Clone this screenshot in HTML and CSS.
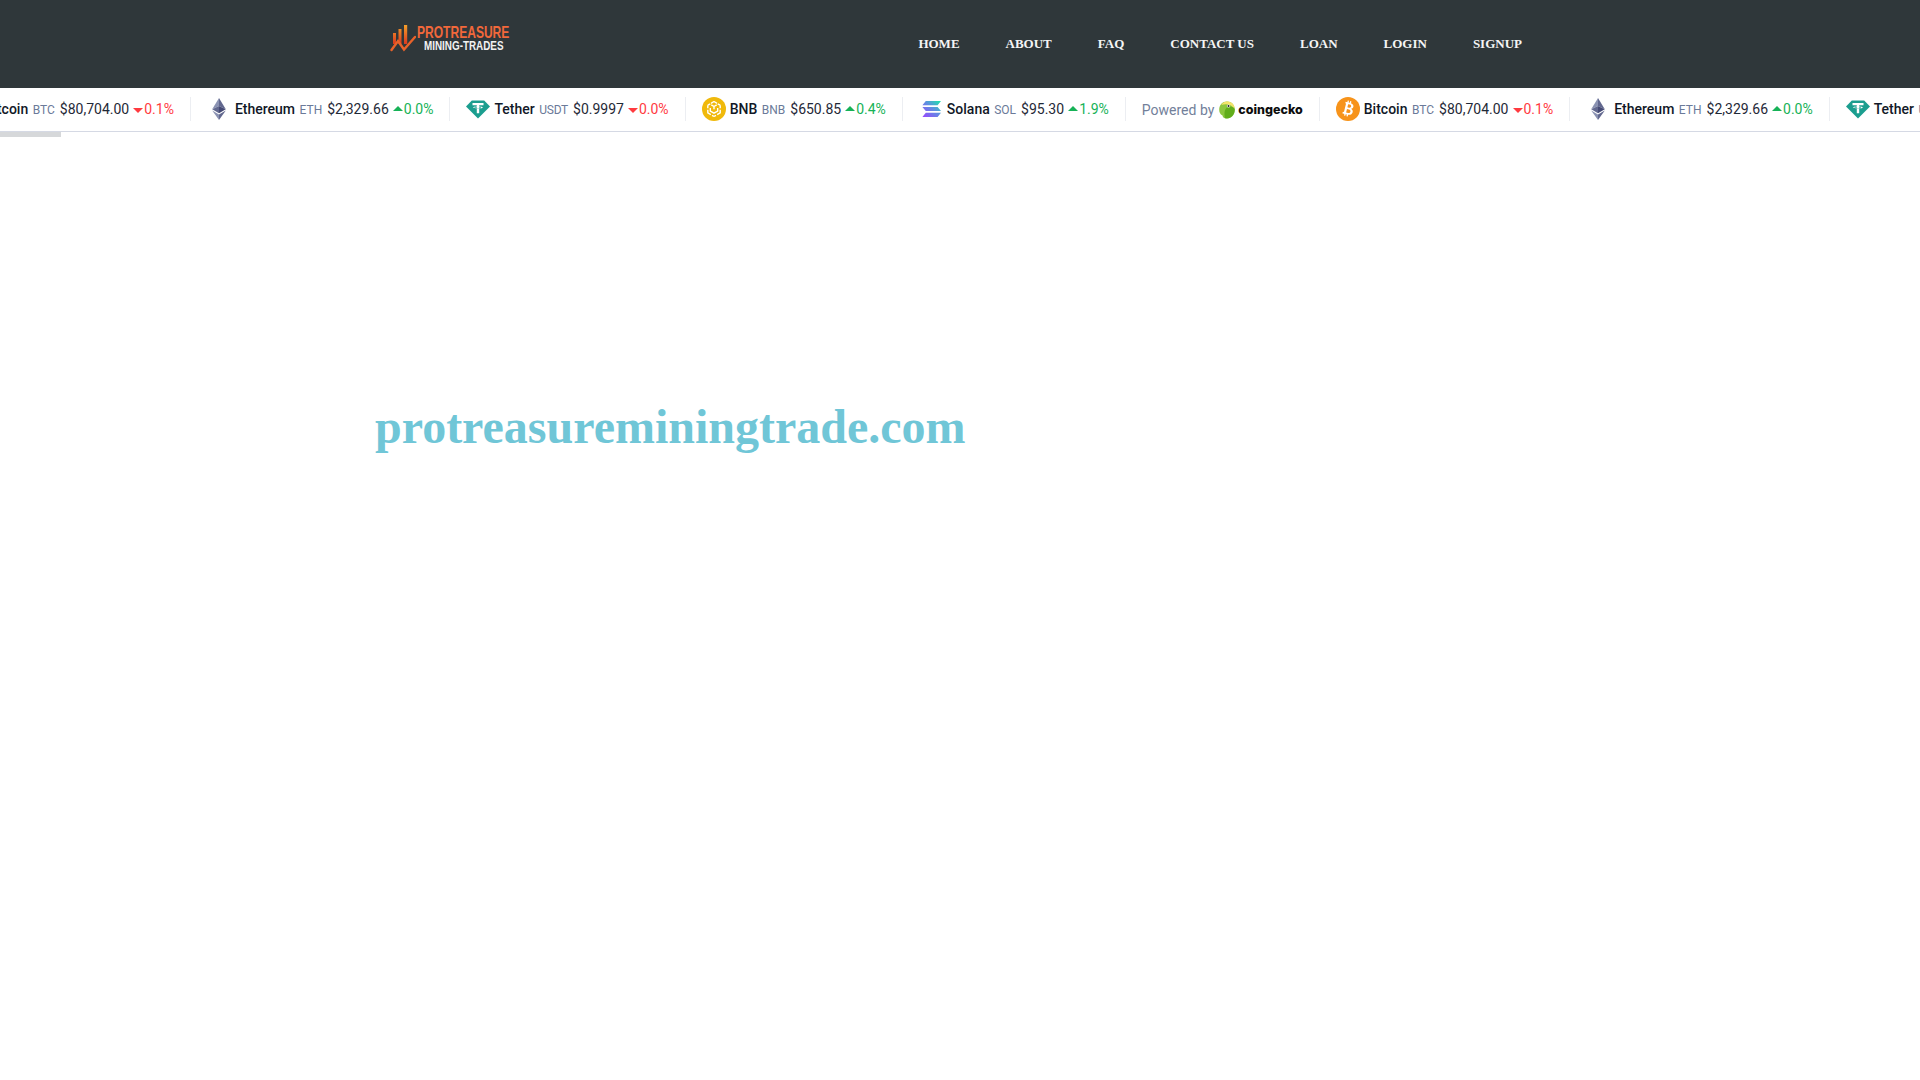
FILE: index.html
```html
<!DOCTYPE html>
<html lang="en">
<head>
<meta charset="utf-8">
<title>protreasureminingtrade.com</title>
<link rel="stylesheet" href="styles.css">
</head>
<body>
<svg class="defs" width="0" height="0" aria-hidden="true">
  <symbol id="i-btc" viewBox="0 0 24 24">
    <circle cx="12" cy="12" r="12" fill="#f7931a"/>
    <path transform="rotate(14 12 12)" fill="#fff" fill-rule="evenodd" d="M8 5.500h1.700V3.800h1.300v1.700h1.200V3.800h1.300v1.800c2 .3 3.200 1.400 3.200 3 0 1.200-.7 2.100-1.700 2.500 1.400.4 2.300 1.400 2.300 2.900 0 2-1.500 3.300-3.800 3.500v1.800h-1.300v-1.700H11v1.700H9.700v-1.700H7.500l.3-1.700h1V7.200H8zM11 7.300v3.200h1.600c1.100 0 1.800-.6 1.800-1.600s-.7-1.600-1.800-1.600zm0 4.900v3.600h2c1.200 0 2-.7 2-1.800s-.8-1.800-2-1.800z"/>
  </symbol>
  <symbol id="i-eth" viewBox="0 0 24 24">
    <path fill="#8a92b2" d="M12 1 5.200 12.200 12 9.100z"/>
    <path fill="#62688f" d="M12 1v8.100l6.800 3.100z"/>
    <path fill="#62688f" d="M5.200 12.200 12 16.200V9.100z"/>
    <path fill="#454a75" d="M18.800 12.200 12 16.200V9.100z"/>
    <path fill="#8a92b2" d="M5.200 13.500 12 23v-5.500z"/>
    <path fill="#62688f" d="M18.800 13.500 12 23v-5.500z"/>
  </symbol>
  <symbol id="i-usdt" viewBox="0 0 24 24">
    <path fill="#1b9e8f" d="M5.800 3.500h12.400L24 9.600 12 21.500 0 9.600z"/>
    <path fill="#fff" d="M6.500 6h11v2.200h-4.300v1.300c2 .1 3.700.5 3.700 1s-1.700.9-3.700 1v4.700h-2.400v-4.700c-2-.1-3.700-.5-3.700-1s1.700-.9 3.700-1V8.200H6.500zm4.300 4.300c-1.500.1-2.700.3-2.700.5s2 .5 3.900.5 3.900-.3 3.900-.5-1.200-.4-2.700-.5v.6h-2.400z"/>
  </symbol>
  <symbol id="i-bnb" viewBox="0 0 24 24">
    <circle cx="12" cy="12" r="12" fill="#f0b90b"/>
    <path fill="none" stroke="#fff" stroke-width="1.400" d="M12 4.500 15 6.300M12 4.500 9 6.300M5.800 8.200 8.300 6.800M18.200 8.200 15.700 6.800M5.800 8.200v3M18.200 8.200v3M5.800 12.800v3l3 1.800M18.200 12.800v3l-3 1.800M12 19.500l-2-1.200M12 19.500l2-1.200M12 9.500l2.700-1.600M12 9.500 9.300 7.900M12 9.500v2.800M8.300 11v3l3.700 2.200 3.700-2.200v-3"/>
  </symbol>
  <symbol id="i-sol" viewBox="0 0 24 24">
    <defs>
      <linearGradient id="solgrad" x1="0" y1="1" x2="1" y2="0">
        <stop offset="0" stop-color="#9945ff"/>
        <stop offset=".55" stop-color="#5f8fe0"/>
        <stop offset="1" stop-color="#19e8a8"/>
      </linearGradient>
    </defs>
    <path fill="url(#solgrad)" d="M6.800 4h15.200l-3.400 4.200H3.400zM3.400 9.900h15.200l3.400 4.200H6.800zM6.800 15.800h15.200L18.600 20H3.400z"/>
  </symbol>
  <symbol id="i-gecko" viewBox="0 0 16 18">
    <path fill="#8dc63f" d="M8 .5c4.500 0 7.800 3.500 7.800 8.300 0 4.800-3.300 8.700-7.800 8.700-3 0-4.300-1-4.500-3C1 13.500.2 11 .2 8.800.2 4 3.500.5 8 .5z"/>
    <path fill="#f4e36a" d="M8 .5C12 .5 15.300 3 15.800 7.500L12 4.500C9 3 5.500 3 2.300 4 3.500 2 5.500.5 8 .5z"/>
    <path fill="#4fa30d" d="M6 17.300C4.800 12 5.500 8 8.500 6c2.500-1 5.500-.2 7.300 2 .3 5-3.300 9.500-7.800 9.500-.7 0-1.400 0-2-.2z" opacity=".7"/>
    <circle cx="9.500" cy="5" r="1.600" fill="#fff"/>
    <circle cx="9.500" cy="5" r="1" fill="#222"/>
  </symbol>
</svg>

<header class="topbar">
  <div class="container topbar-inner">
    <a class="logo" href="#">
      <svg class="logo-mark" viewBox="0 0 26 29" width="26" height="29" aria-hidden="true">
        <defs>
          <linearGradient id="logograd" x1="0" y1="1" x2="0" y2="0">
            <stop offset="0" stop-color="#d8381f"/>
            <stop offset="1" stop-color="#f5a02a"/>
          </linearGradient>
        </defs>
        <path fill="url(#logograd)" d="M3 9h3v11H3zM8.500 5h3v15h-3zM14 1h3.200v19H14z"/>
        <path fill="none" stroke="#e8622a" stroke-width="2.400" stroke-linecap="round" d="M1.500 26 8 17l6 8.500L25 13"/>
      </svg>
      <span class="logo-text">
        <span class="logo-top">PROTREASURE</span>
        <span class="logo-sub">MINING-TRADES</span>
      </span>
    </a>
    <nav class="nav">
      <a href="#">Home</a>
      <a href="#">About</a>
      <a href="#">FAQ</a>
      <a href="#">Contact Us</a>
      <a href="#">Loan</a>
      <a href="#">Login</a>
      <a href="#">Signup</a>
    </nav>
  </div>
</header>

<div class="ticker">
  <div class="track">
    <div class="item"><svg class="ic"><use href="#i-btc"/></svg><b>Bitcoin</b><span class="sym">BTC</span><span class="price">$80,704.00</span><span class="chg down"><i></i>0.1%</span></div>
    <div class="item"><svg class="ic"><use href="#i-eth"/></svg><b>Ethereum</b><span class="sym">ETH</span><span class="price">$2,329.66</span><span class="chg up"><i></i>0.0%</span></div>
    <div class="item"><svg class="ic"><use href="#i-usdt"/></svg><b>Tether</b><span class="sym tight">USDT</span><span class="price">$0.9997</span><span class="chg down"><i></i>0.0%</span></div>
    <div class="item"><svg class="ic"><use href="#i-bnb"/></svg><b>BNB</b><span class="sym">BNB</span><span class="price">$650.85</span><span class="chg up"><i></i>0.4%</span></div>
    <div class="item"><svg class="ic"><use href="#i-sol"/></svg><b>Solana</b><span class="sym">SOL</span><span class="price">$95.30</span><span class="chg up"><i></i>1.9%</span></div>
    <div class="item powered">Powered by<svg class="gecko"><use href="#i-gecko"/></svg><span class="cg">coingecko</span></div>
    <div class="item"><svg class="ic"><use href="#i-btc"/></svg><b>Bitcoin</b><span class="sym">BTC</span><span class="price">$80,704.00</span><span class="chg down"><i></i>0.1%</span></div>
    <div class="item"><svg class="ic"><use href="#i-eth"/></svg><b>Ethereum</b><span class="sym">ETH</span><span class="price">$2,329.66</span><span class="chg up"><i></i>0.0%</span></div>
    <div class="item"><svg class="ic"><use href="#i-usdt"/></svg><b>Tether</b><span class="sym tight">USDT</span><span class="price">$0.9997</span><span class="chg down"><i></i>0.0%</span></div>
  </div>
</div>
<div class="progress"></div>

<main class="container main">
  <h1 class="domain">protreasureminingtrade.com</h1>
</main>
</body>
</html>
```
FILE: styles.css
```css
* { box-sizing: border-box; }
html, body { margin: 0; padding: 0; }
body {
  background: #fff;
  font-family: "Liberation Serif", serif;
  overflow: hidden;
  height: 1080px;
}
.defs { display: block; width: 0; height: 0; }
.container { width: 1170px; margin: 0 auto; padding: 0 15px; }
.main { padding: 0; }

.topbar { height: 88px; background: #2f373a; }
.topbar-inner { display: flex; align-items: center; justify-content: space-between; height: 88px; padding-right: 23px; }
.logo { display: flex; align-items: center; gap: 1px; margin-bottom: 12px; text-decoration: none; }
.logo-mark { display: block; }
.logo-text { display: flex; flex-direction: column; width: 94px; white-space: nowrap; }
.logo-top {
  font-family: "Liberation Sans", sans-serif; transform: scaleX(.73); transform-origin: left center;
  font-weight: 700; font-size: 16.5px; line-height: 16px; color: #f2683a;
}
.logo-sub {
  font-family: "Liberation Sans", sans-serif; transform: scaleX(.79); transform-origin: left center;
  font-weight: 700; font-size: 12.5px; line-height: 13px; color: #f2f2f2; margin-left: 7px;
}
.nav { display: flex; gap: 46px; }
.nav a {
  color: #f5f5f5; font-weight: 700; font-size: 13px; line-height: 18px;
  text-transform: uppercase; text-decoration: none;
}

.ticker {
  height: 44px; overflow: hidden; background: #fff;
  border-bottom: 1px solid #d5d9e4;
  font-family: Roboto, sans-serif;
}
.track { display: flex; width: max-content; margin-left: -59.5px; padding-top: 9px; }
.item {
  display: flex; align-items: center; height: 24px;
  padding: 0 16px; border-right: 1px solid #eceef2;
  font-size: 14px; line-height: 20px; color: #1f2937; white-space: nowrap;
}
.ic { width: 24px; height: 24px; margin-right: 4px; flex: none; }
.item b { font-weight: 500; color: #111827; }
.sym { font-size: 12px; color: #6b7a99; margin: 1px 5px 0 4.5px; }
.tight { letter-spacing: -.25px; }
.price { color: #1f2937; margin-right: 4px; }
.chg { display: flex; align-items: center; }
.chg i { width: 0; height: 0; margin-right: 1px; border-left: 5px solid transparent; border-right: 5px solid transparent; }
.down { color: #ff3a3f; }
.down i { border-top: 5px solid #ff3a3f; margin-top: 2px; }
.up { color: #16b257; }
.up i { border-bottom: 5px solid #16b257; margin-top: -2px; }
.powered { color: #72809a; padding-top: 2px; }
.gecko { width: 16px; height: 18px; margin: 0 3px 0 5px; flex: none; }
.cg { font-family: Inter, sans-serif; font-weight: 800; font-size: 12.500px; color: #0d0d0d; }

.progress { width: 61px; height: 5px; background: #d6d8da; }

.domain {
  margin: 262px 0 0;
  font-size: 48px; line-height: 56px; font-weight: 700;
  color: #70c6d7;
}
```
